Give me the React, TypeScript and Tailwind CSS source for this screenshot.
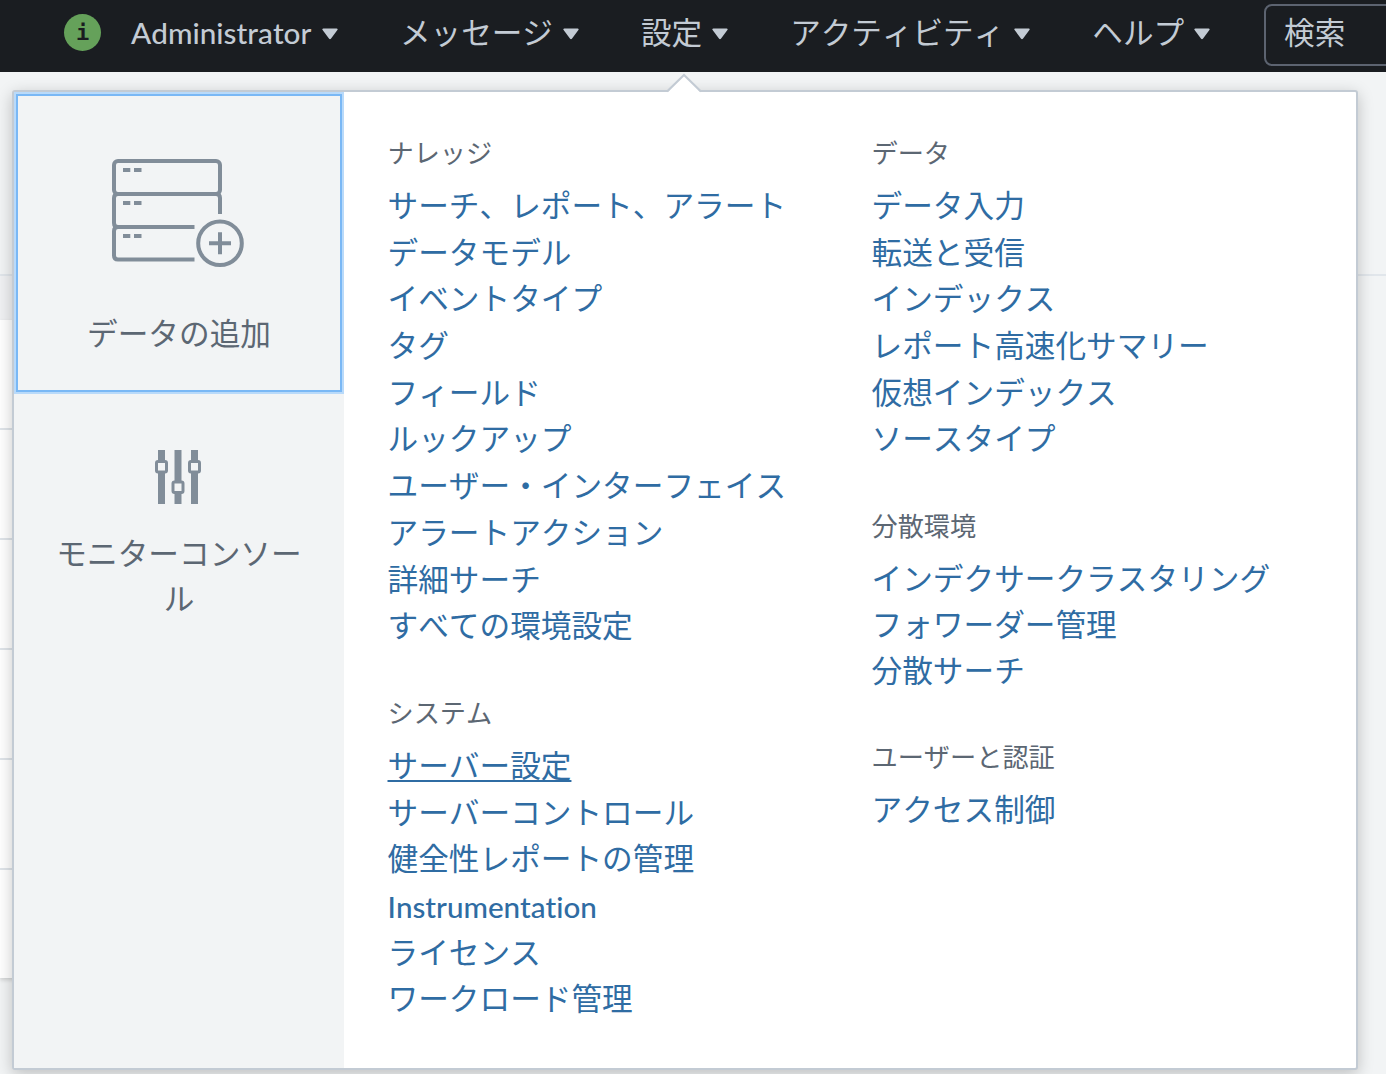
import clsx from "clsx";

type Group = { title: string; links: string[]; tight?: boolean };

const navItems = ["Administrator", "メッセージ", "設定", "アクティビティ", "ヘルプ"];

const leftGroups: Group[] = [
  {
    title: "ナレッジ",
    links: [
      "サーチ、レポート、アラート",
      "データモデル",
      "イベントタイプ",
      "タグ",
      "フィールド",
      "ルックアップ",
      "ユーザー・インターフェイス",
      "アラートアクション",
      "詳細サーチ",
      "すべての環境設定",
    ],
  },
  {
    title: "システム",
    links: [
      "サーバー設定",
      "サーバーコントロール",
      "健全性レポートの管理",
      "Instrumentation",
      "ライセンス",
      "ワークロード管理",
    ],
  },
];

const rightGroups: Group[] = [
  {
    title: "データ",
    links: [
      "データ入力",
      "転送と受信",
      "インデックス",
      "レポート高速化サマリー",
      "仮想インデックス",
      "ソースタイプ",
    ],
  },
  {
    title: "分散環境",
    links: ["インデクサークラスタリング", "フォワーダー管理", "分散サーチ"],
    tight: true,
  },
  { title: "ユーザーと認証", links: ["アクセス制御"], tight: true },
];

const activeLink = "サーバー設定";

function Caret() {
  return (
    <svg width="16" height="12" viewBox="0 0 16 12" className="mt-[2px] shrink-0 fill-[#c3cbd4]">
      <path d="M1.4 0.5h13.2c1 0 1.4 0.9 0.8 1.6l-6.5 8.6c-0.5 0.6-1.3 0.6-1.8 0L0.6 2.1C0 1.4 0.4 0.5 1.4 0.5z" />
    </svg>
  );
}

function ServerAddIcon() {
  return (
    <svg width="134" height="110" viewBox="112 158 134 110" fill="none" stroke="#818d99" strokeWidth="4">
      <rect x="114" y="161" width="106" height="33" rx="4" />
      <path d="M220 214v-16q0-4-4-4H118q-4 0-4 4v25q0 4 4 4h76.5" />
      <path d="M194.5 259.500H118q-4 0-4-4V231q0-4 4-4" />
      <path d="M123 170h7.300M134 170h7.500M123 203h7.300M134 203h7.500M123 236h7.300M134 236h7.500" />
      <circle cx="220" cy="243.300" r="21.800" />
      <path d="M209 243.300h22M220 232.300v22" />
    </svg>
  );
}

function SlidersIcon() {
  return (
    <svg width="48" height="54" viewBox="155 450 48 54" fill="#818d99">
      <path d="M158 450h7v54h-7zM174.500 450h7v54h-7zM191 450h7v54h-7z" />
      <g fill="#f2f4f5" stroke="#818d99" strokeWidth="3">
        <rect x="156.500" y="461.500" width="10" height="10.500" rx="1.500" />
        <rect x="173" y="482" width="10" height="10.500" rx="1.500" />
        <rect x="189.500" y="461.500" width="10" height="10.500" rx="1.500" />
      </g>
    </svg>
  );
}

function MenuGroup({ title, links, tight }: Group) {
  return (
    <section className="mb-[43px]">
      <h3 className="mb-[10px] text-[26.2px] leading-10 text-[#5c6773]">{title}</h3>
      <ul>
        {links.map((link) => (
          <li
            key={link}
            className={clsx(
              "whitespace-nowrap",
              tight ? "h-[46px] leading-[46px]" : "h-[46.7px] leading-[46.7px]"
            )}
          >
            <a
              className={clsx(
                "text-[#2f6ca3]",
                link === activeLink && "underline decoration-2 underline-offset-[3px] [text-decoration-skip-ink:none]",
                link === "Instrumentation" && "relative top-px text-[29.6px] font-medium"
              )}
            >
              {link}
            </a>
          </li>
        ))}
      </ul>
    </section>
  );
}

function TopBar() {
  return (
    <header className="flex h-[72px] items-start overflow-hidden bg-[#1a1d21] pl-16 text-[30.6px] text-[#c3cbd4]">
      <div className="mt-[14px] flex h-[37px] w-[37px] shrink-0 items-center justify-center rounded-full bg-[#65a15a] font-['DejaVu_Sans_Mono'] text-[22px] font-bold leading-none text-[#1a1d21]">
        i
      </div>
      <nav className="ml-[30px] flex h-[66px] shrink-0 items-center gap-[62px]">
        {navItems.map((item, i) => (
          <div key={item} className="flex items-center gap-[10px] whitespace-nowrap">
            <span className={clsx(i === 0 && "w-[181px] text-[29.7px] font-medium")}>{item}</span>
            <Caret />
          </div>
        ))}
      </nav>
      <div className="ml-[54px] mt-1 flex h-[62px] w-[240px] shrink-0 items-center rounded-lg border-2 border-[#5c6370] pl-[18px]">
        <span className="-mt-1">検索</span>
      </div>
    </header>
  );
}

function SettingsMenu() {
  return (
    <div className="absolute left-3 top-[90px] flex h-[980px] w-[1346px] rounded-[3px] border-2 border-[#c3cbd4] bg-white shadow-[0_4px_16px_rgba(0,0,0,0.22)]">
      <svg width="36" height="20" viewBox="0 0 36 20" className="absolute left-[652px] top-[-19px]">
        <path d="M2 19L18 3L34 19V20H2z" fill="#fff" />
        <path d="M1 18.500L18 2L35 18.500" fill="none" stroke="#c3cbd4" strokeWidth="2" />
      </svg>
      <aside className="w-[330px] shrink-0 bg-[#f2f4f5] text-center leading-[44.5px] text-[#5c6773]">
        <div className="flex h-[302px] flex-col items-center border-2 border-[#b9dafa] pt-16 shadow-[inset_0_0_0_2px_#7ab8f5]">
          <ServerAddIcon />
          <div className="mt-[44px]">データの追加</div>
        </div>
        <div className="flex flex-col items-center px-[38px] pt-[56px]">
          <SlidersIcon />
          <div className="mt-[28px] break-all">モニターコンソール</div>
        </div>
      </aside>
      <div className="grid grid-cols-[484px_484px] pl-[43.5px] pt-[41px]">
        <div>
          {leftGroups.map((group) => (
            <MenuGroup key={group.title} {...group} />
          ))}
        </div>
        <div>
          {rightGroups.map((group) => (
            <MenuGroup key={group.title} {...group} />
          ))}
        </div>
      </div>
    </div>
  );
}

export default function App() {
  return (
    <div
      lang="ja"
      className="relative h-[1074px] w-[1386px] overflow-hidden bg-[#f2f4f5] font-[Lato,'Noto_Sans_CJK_JP',sans-serif] text-[30.67px] [font-kerning:none] [font-variant-ligatures:none]"
    >
      <TopBar />
      <div className="h-[204px] border-b-2 border-[#e1e6eb]" />
      <div className="h-11 w-[1340px] bg-[#f0f1f3]" />
      <div className="w-[1340px] bg-white shadow-[0_2px_4px_rgba(0,0,0,0.15)]">
        {[0, 1, 2, 3, 4, 5].map((row) => (
          <div key={row} className="h-[110px] border-b-2 border-[#dfe4e9] last:h-[108px] last:border-0" />
        ))}
      </div>
      <SettingsMenu />
    </div>
  );
}
